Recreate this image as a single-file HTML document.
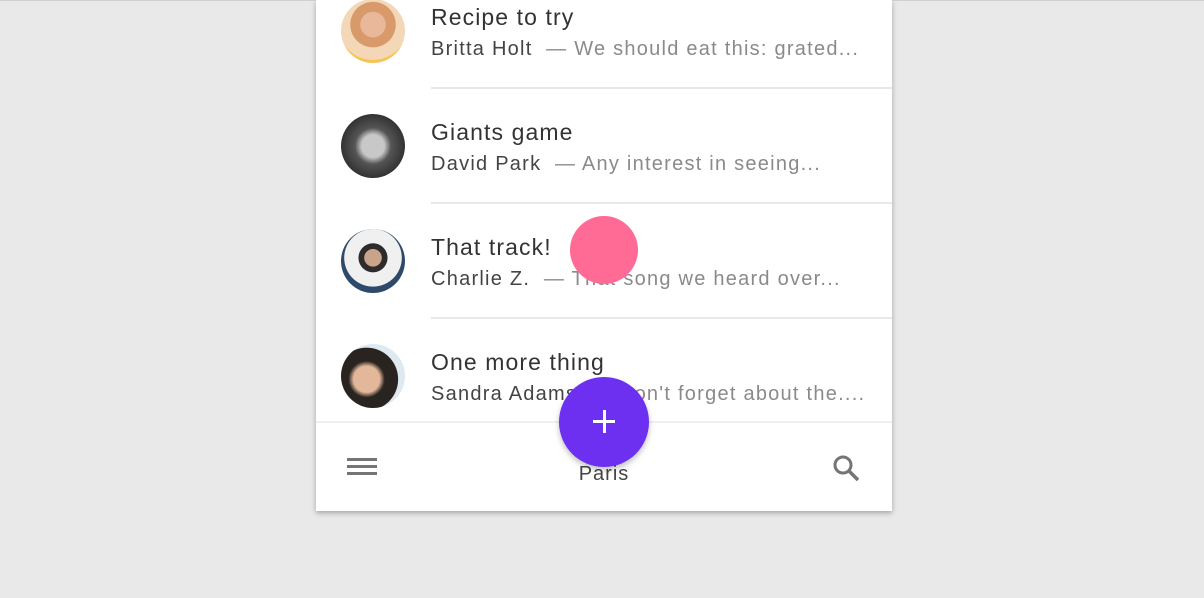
<!DOCTYPE html><html><head><style>
body{margin:0;width:1204px;height:598px;background:#e9e9e9;position:relative;overflow:hidden;font-family:"Liberation Sans",sans-serif}
#card{position:absolute;left:316px;top:0;width:576px;height:511px;background:#fff;box-shadow:0 2px 5px rgba(0,0,0,.3);overflow:hidden}
.t{position:absolute;left:115px;font-size:23px;color:#333;letter-spacing:1.1px}
.s{position:absolute;left:115px;font-size:20px;color:#444;white-space:nowrap;letter-spacing:1.25px}
.s span{color:#8a8a8a}
.av{position:absolute;left:25px;width:64px;height:64px;border-radius:50%}
.d{position:absolute;left:115px;right:0;height:2px;background:#e8e8e8}
</style></head><body>
<div style="position:absolute;left:0;top:0;width:1204px;height:1px;background:#d0d0d0"></div>
<div id="card">
<div class="av" style="top:-1px;background:radial-gradient(circle at 50% 40%,#e9b79a 0 25%,#d89a6a 26% 45%,#f3d7b7 46% 70%,#f7c453 71%)"></div>
<div class="t" style="top:4px">Recipe to try</div>
<div class="s" style="top:38px">Britta Holt &nbsp;<span>— We should eat this: grated...</span></div>
<div class="d" style="top:87px"></div>
<div class="av" style="top:114px;background:radial-gradient(circle at 50% 50%,#c8c8c8 0 25%,#555 40%,#333 70%)"></div>
<div class="t" style="top:119px">Giants game</div>
<div class="s" style="top:153px">David Park &nbsp;<span>— Any interest in seeing...</span></div>
<div class="d" style="top:202px"></div>
<div class="av" style="top:229px;background:radial-gradient(circle at 50% 45%,#c9a48a 0 18%,#2c2c2c 19% 30%,#f0f0f0 31% 60%,#2e4a6a 61%);"></div>
<div class="t" style="top:234px">That track!</div>
<div class="s" style="top:268px">Charlie Z. &nbsp;<span>— That song we heard over...</span></div>
<div class="d" style="top:317px"></div>
<div class="av" style="top:344px;background:radial-gradient(circle at 40% 55%,#e3b89a 0 25%,#2a2420 35% 60%,#dfe9f0 61%)"></div>
<div class="t" style="top:349px">One more thing</div>
<div class="s" style="top:383px">Sandra Adams &nbsp;<span>— Don't forget about the....</span></div>
<div style="position:absolute;left:0;right:0;top:421px;height:90px;background:#fff;border-top:2px solid #f0f0f0"></div>
<div style="position:absolute;left:31px;top:458px;width:30px;height:3px;background:#757575;box-shadow:0 7px 0 #757575,0 14px 0 #757575"></div>
<svg style="position:absolute;left:515px;top:453px" width="30" height="30" viewBox="0 0 30 30"><circle cx="12" cy="12" r="8" fill="none" stroke="#757575" stroke-width="3"/><path d="M18 18l9 9" stroke="#757575" stroke-width="3.5"/></svg>
<div style="position:absolute;left:258px;top:464px;width:60px;height:16px;overflow:hidden;text-align:center;font-size:20px;color:#444;line-height:20px;letter-spacing:1px">Paris</div>
<div style="position:absolute;left:254px;top:216px;width:68px;height:68px;border-radius:50%;background:#ff6b94"></div>
<div style="position:absolute;left:243px;top:377px;width:90px;height:90px;border-radius:50%;background:#6d2ff0;box-shadow:0 3px 6px rgba(0,0,0,.25)"></div>
<div style="position:absolute;left:277px;top:420px;width:22px;height:3px;background:#fff"></div>
<div style="position:absolute;left:287px;top:410px;width:3px;height:23px;background:#fff"></div>
</div>
</body></html>
